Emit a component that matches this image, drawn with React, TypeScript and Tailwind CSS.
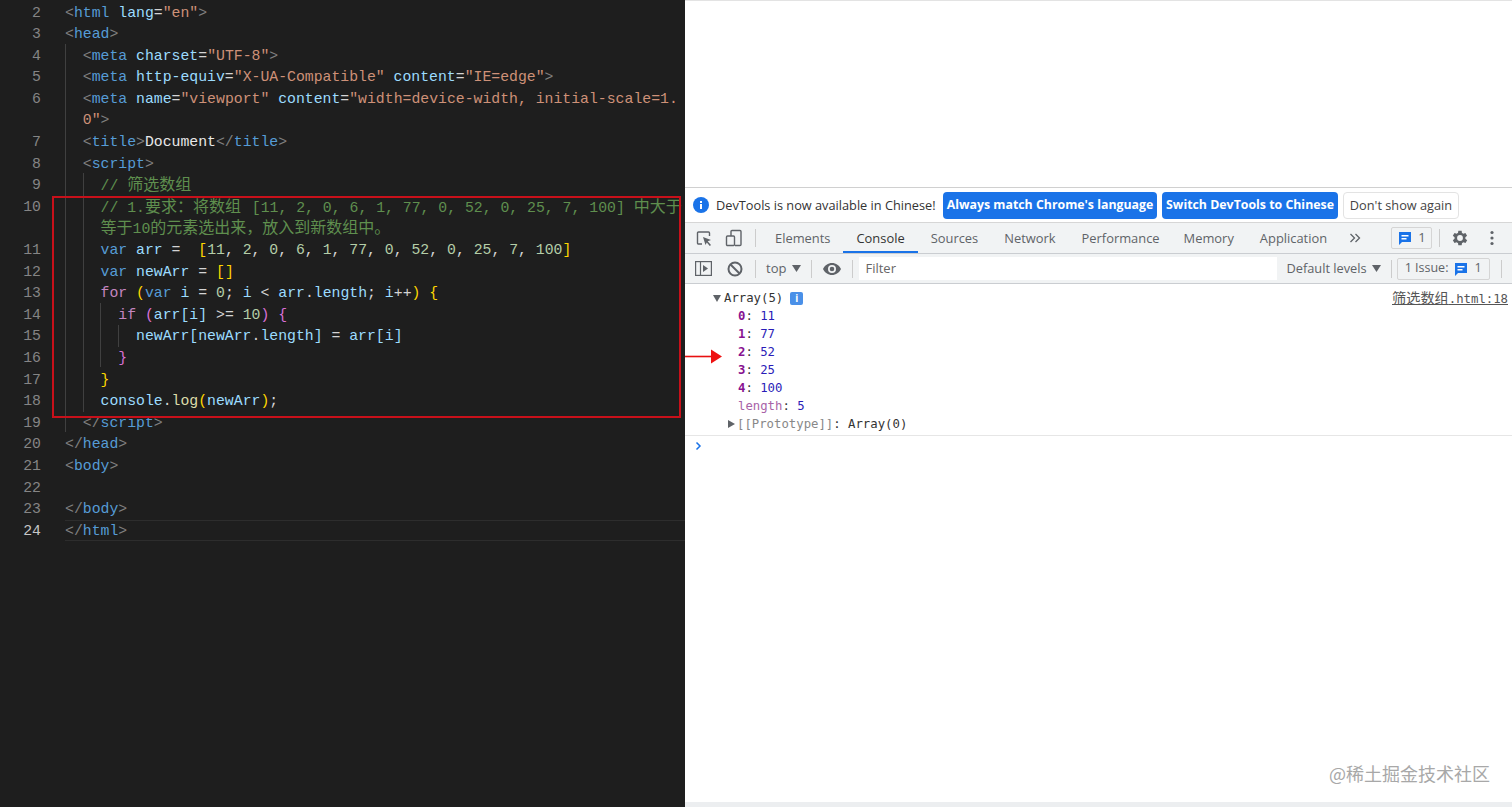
import React from "react";

const T = ({ c, children }: { c: string; children: React.ReactNode }) => <span className={c}>{children}</span>;
const P = "text-[#808080]";
const TAG = "text-[#569cd6]";
const A = "text-[#9cdcfe]";
const S = "text-[#ce9178]";
const C = "text-[#5f8f4e]";
const N = "text-[#b5cea8]";
const W = "text-[#d4d4d4]";
const K = "text-[#c586c0]";
const Y = "text-[#ffd700]";
const M = "text-[#da70d6]";
const Z = ({ children }: { children: React.ReactNode }) => (
  <span className="inline-block text-[16px] leading-[18px] font-['Noto_Sans_CJK_SC',sans-serif]">{children}</span>
);

const Row = ({ n, indent = 0, active, children }: { n?: number; indent?: number; active?: boolean; children?: React.ReactNode }) => (
  <div className="flex h-[21.6px] items-center whitespace-pre leading-[21.6px]">
    <div className={`w-[41px] shrink-0 text-right ${active ? "text-[#c6c6c6]" : "text-[#858585]"}`}>{n}</div>
    <div className="shrink-0" style={{ width: 24 + indent * 17.76 }} />
    <div className="min-w-0">{children}</div>
  </div>
);

const Tab = ({ label, active, className = "" }: { label: string; active?: boolean; className?: string }) => (
  <div className={`flex h-full items-center px-[13px] ${active ? "border-b-2 border-[#1a73e8] pt-[3px] text-[#333]" : "pt-[1px] text-[#5f6368]"} ${className}`}>{label}</div>
);
const Sep = ({ className = "" }: { className?: string }) => <div className={`h-[18px] w-px bg-[#ccc] ${className}`} />;
const Msg = () => (
  <svg width="16" height="16" viewBox="0 0 16 16" className="shrink-0">
    <path d="M2 2h12v10H5l-3 3z" fill="#1a73e8" />
    <path d="M4.500 5h7v1.400h-7zM4.500 8h5v1.400h-5z" fill="#fff" />
  </svg>
);
const Key = ({ k, v, c = "text-[#2a1cb8]" }: { k: string; v: string; c?: string }) => (
  <div className="h-[18px] pl-[53px] leading-[18px]">
    <span className="font-bold text-[#881391]">{k}</span>
    <span className="text-[#333]">: </span>
    <span className={c}>{v}</span>
  </div>
);

export default function App() {
  return (
    <div className="flex h-[807px] w-[1512px] overflow-hidden bg-white">
      {/* editor */}
      <div className="relative h-full w-[685px] shrink-0 overflow-hidden bg-[#1e1e1e] pt-[2.5px] font-['Liberation_Mono',monospace] text-[14.8px]">
        <Row n={2}><T c={P}>&lt;</T><T c={TAG}>html</T> <T c={A}>lang</T><T c={W}>=</T><T c={S}>"en"</T><T c={P}>&gt;</T></Row>
        <Row n={3}><T c={P}>&lt;</T><T c={TAG}>head</T><T c={P}>&gt;</T></Row>
        <Row n={4} indent={1}><T c={P}>&lt;</T><T c={TAG}>meta</T> <T c={A}>charset</T><T c={W}>=</T><T c={S}>"UTF-8"</T><T c={P}>&gt;</T></Row>
        <Row n={5} indent={1}><T c={P}>&lt;</T><T c={TAG}>meta</T> <T c={A}>http-equiv</T><T c={W}>=</T><T c={S}>"X-UA-Compatible"</T> <T c={A}>content</T><T c={W}>=</T><T c={S}>"IE=edge"</T><T c={P}>&gt;</T></Row>
        <Row n={6} indent={1}><T c={P}>&lt;</T><T c={TAG}>meta</T> <T c={A}>name</T><T c={W}>=</T><T c={S}>"viewport"</T> <T c={A}>content</T><T c={W}>=</T><T c={S}>"width=device-width, initial-scale=1.</T></Row>
        <Row indent={1}><T c={S}>0"</T><T c={P}>&gt;</T></Row>
        <Row n={7} indent={1}><T c={P}>&lt;</T><T c={TAG}>title</T><T c={P}>&gt;</T><T c="text-[#e8e8e8]">Document</T><T c={P}>&lt;/</T><T c={TAG}>title</T><T c={P}>&gt;</T></Row>
        <Row n={8} indent={1}><T c={P}>&lt;</T><T c={TAG}>script</T><T c={P}>&gt;</T></Row>
        <Row n={9} indent={2}><T c={C}>// <Z>筛选数组</Z></T></Row>
        <Row n={10} indent={2}><T c={C}>// 1.<Z>要求：将数组</Z> <span className="ml-[2px]">[11, 2, 0, 6, 1, 77, 0, 52, 0, 25, 7, 100]</span> <Z>中大于</Z></T></Row>
        <Row indent={2}><T c={C}><Z>等于</Z>10<Z>的元素选出来，放入到新数组中。</Z></T></Row>
        <Row n={11} indent={2}><T c={TAG}>var</T> <T c={A}>arr</T> <T c={W}>=</T>  <T c={Y}>[</T><T c={N}>11</T><T c={W}>, </T><T c={N}>2</T><T c={W}>, </T><T c={N}>0</T><T c={W}>, </T><T c={N}>6</T><T c={W}>, </T><T c={N}>1</T><T c={W}>, </T><T c={N}>77</T><T c={W}>, </T><T c={N}>0</T><T c={W}>, </T><T c={N}>52</T><T c={W}>, </T><T c={N}>0</T><T c={W}>, </T><T c={N}>25</T><T c={W}>, </T><T c={N}>7</T><T c={W}>, </T><T c={N}>100</T><T c={Y}>]</T></Row>
        <Row n={12} indent={2}><T c={TAG}>var</T> <T c={A}>newArr</T> <T c={W}>=</T> <T c={Y}>[]</T></Row>
        <Row n={13} indent={2}><T c={K}>for</T> <T c={Y}>(</T><T c={TAG}>var</T> <T c={A}>i</T> <T c={W}>=</T> <T c={N}>0</T><T c={W}>;</T> <T c={A}>i</T> <T c={W}>&lt;</T> <T c={A}>arr</T><T c={W}>.</T><T c={A}>length</T><T c={W}>;</T> <T c={A}>i</T><T c={W}>++</T><T c={Y}>)</T> <T c={Y}>{"{"}</T></Row>
        <Row n={14} indent={3}><T c={K}>if</T> <T c={M}>(</T><T c={A}>arr</T><T c={A}>[</T><T c={A}>i</T><T c={A}>]</T> <T c={W}>&gt;=</T> <T c={N}>10</T><T c={M}>)</T> <T c={M}>{"{"}</T></Row>
        <Row n={15} indent={4}><T c={A}>newArr</T><T c={A}>[</T><T c={A}>newArr</T><T c={W}>.</T><T c={A}>length</T><T c={A}>]</T> <T c={W}>=</T> <T c={A}>arr</T><T c={A}>[</T><T c={A}>i</T><T c={A}>]</T></Row>
        <Row n={16} indent={3}><T c={M}>{"}"}</T></Row>
        <Row n={17} indent={2}><T c={Y}>{"}"}</T></Row>
        <Row n={18} indent={2}><T c={A}>console</T><T c={W}>.</T><T c="text-[#dcdcaa]">log</T><T c={Y}>(</T><T c={A}>newArr</T><T c={Y}>)</T><T c={W}>;</T></Row>
        <Row n={19} indent={1}><T c={P}>&lt;/</T><T c={TAG}>script</T><T c={P}>&gt;</T></Row>
        <Row n={20}><T c={P}>&lt;/</T><T c={TAG}>head</T><T c={P}>&gt;</T></Row>
        <Row n={21}><T c={P}>&lt;</T><T c={TAG}>body</T><T c={P}>&gt;</T></Row>
        <Row n={22} />
        <Row n={23}><T c={P}>&lt;/</T><T c={TAG}>body</T><T c={P}>&gt;</T></Row>
        <Row n={24} active><T c={P}>&lt;/</T><T c={TAG}>html</T><T c={P}>&gt;</T></Row>

        {/* indent guides, active line and annotation box lie over the code */}
        <div className="absolute left-[65px] top-[44px] h-[388px] w-px bg-[#404040]" />
        <div className="absolute left-[83px] top-[173px] h-[239px] w-px bg-[#404040]" />
        <div className="absolute left-[100px] top-[303px] h-[64px] w-px bg-[#404040]" />
        <div className="absolute left-[118px] top-[325px] h-[22px] w-px bg-[#404040]" />
        <div className="absolute left-[65px] right-0 top-[520px] h-[21px] border-y border-[#2d2d2d]" />
        <div className="absolute left-[52px] top-[196px] h-[222px] w-[629px] border-2 border-[#c8101a]" />
      </div>

      {/* browser + devtools */}
      <div className="relative flex h-full min-w-0 flex-1 flex-col font-['Open_Sans',sans-serif] text-[12.5px]">
        <div className="h-[188px] shrink-0 border-y border-t-[#e3e3e3] border-b-[#d0d0d0] bg-white" />
        <div className="flex h-[34px] shrink-0 items-center bg-white pl-[8px] text-[12.75px] text-[#333]">
          <svg width="16" height="16" viewBox="0 0 16 16"><circle cx="8" cy="8" r="8" fill="#1a73e8" /><rect x="7" y="7" width="2" height="5" fill="#fff" /><rect x="7" y="4" width="2" height="2" fill="#fff" /></svg>
          <span className="ml-[7px] w-[227px] whitespace-nowrap pt-[1px]">DevTools is now available in Chinese!</span>
          <div className="flex h-[27px] w-[214px] items-center justify-center rounded-[4px] bg-[#1a73e8] pt-[1px] text-[12.35px] font-bold whitespace-nowrap text-white">Always match Chrome's language</div>
          <div className="ml-[5px] flex h-[27px] w-[176px] items-center justify-center rounded-[4px] bg-[#1a73e8] pt-[1px] text-[12.35px] font-bold whitespace-nowrap text-white">Switch DevTools to Chinese</div>
          <div className="ml-[5px] flex h-[27px] w-[116px] items-center justify-center rounded-[4px] border border-[#e3e3e3] pt-[1px] whitespace-nowrap text-[#444]">Don't show again</div>
        </div>
        {/* tabs */}
        <div className="flex h-[32px] shrink-0 items-center border-y border-t-[#d6d6d6] border-b-[#cacdd1] bg-[#f1f3f4] pl-[11px]">
          <svg width="17" height="17" viewBox="0 0 17 17" fill="none" stroke="#5f6368" strokeWidth="1.400"><path d="M6 14H2.500A1 1 0 0 1 1.500 13V3A1 1 0 0 1 2.500 2h10a1 1 0 0 1 1 1v3" /><path d="M7 7l8 3-3.300 1.200L15 15l-1.200 1-3-3.600L9.500 15z" fill="#5f6368" stroke="none" /></svg>
          <svg width="18" height="18" viewBox="0 0 18 18" fill="none" stroke="#5f6368" strokeWidth="1.400" className="ml-[12px]"><path d="M6 7V2.500A1 1 0 0 1 7 1.500h8a1 1 0 0 1 1 1v13a1 1 0 0 1-1 1H10" /><rect x="1.500" y="7" width="8" height="9.500" rx="1" /></svg>
          <Sep className="ml-[12px]" />
          <div className="ml-[6px] flex h-full items-center text-[12.9px] whitespace-nowrap">
            <Tab label="Elements" />
            <Tab label="Console" active />
            <Tab label="Sources" />
            <Tab label="Network" />
            <Tab label="Performance" className="-mr-[2px]" />
            <Tab label="Memory" />
            <Tab label="Application" />
          </div>
          <svg width="12" height="12" viewBox="0 0 12 12" fill="none" stroke="#5f6368" strokeWidth="1.300" className="ml-[9px]"><path d="M1.500 2l4 4-4 4M6.500 2l4 4-4 4" /></svg>
          <div className="ml-auto flex items-center">
            <div className="flex h-[22px] w-[41px] items-center justify-center gap-[5px] rounded-[2px] border border-[#d5d5d5] text-[13px] text-[#5f6368]"><Msg />1</div>
            <Sep className="ml-[7px]" />
            <svg width="20" height="20" viewBox="0 0 24 24" className="ml-[10px]" fill="#5f6368"><path d="M19.400 13a7.800 7.800 0 0 0 0-2l2.100-1.600-2-3.500-2.500 1a7.600 7.600 0 0 0-1.700-1L15 3.200h-4l-.4 2.700a7.600 7.600 0 0 0-1.700 1l-2.500-1-2 3.500L6.500 11a7.800 7.800 0 0 0 0 2l-2.100 1.600 2 3.500 2.500-1a7.600 7.600 0 0 0 1.700 1l.4 2.700h4l.4-2.700a7.600 7.600 0 0 0 1.700-1l2.500 1 2-3.500zM13 15.500a3.500 3.500 0 1 1 0-7 3.500 3.500 0 0 1 0 7z" transform="translate(-1 0)" /></svg>
            <svg width="4" height="16" viewBox="0 0 4 16" className="ml-[20px] mr-[18px]" fill="#5f6368"><circle cx="2" cy="2.500" r="1.600" /><circle cx="2" cy="8" r="1.600" /><circle cx="2" cy="13.500" r="1.600" /></svg>
          </div>
        </div>
        {/* console toolbar */}
        <div className="flex h-[30px] shrink-0 items-center border-b border-[#cacdd1] bg-[#f1f3f4] pl-[10px] text-[#5f6368]">
          <svg width="17" height="15" viewBox="0 0 17 15" fill="none" stroke="#5f6368" strokeWidth="1.200"><rect x=".6" y=".6" width="15.800" height="13.800" /><path d="M5.500 .6v13.800" /><path d="M8 4l5 3.500L8 11z" fill="#5f6368" stroke="none" /></svg>
          <svg width="16" height="16" viewBox="0 0 16 16" fill="none" stroke="#5f6368" strokeWidth="2" className="ml-[15px]"><circle cx="8" cy="8" r="6.500" /><path d="M3.500 3.500l9 9" /></svg>
          <Sep className="ml-[12px]" />
          <span className="ml-[10px] pt-[1px] text-[13px]">top</span>
          <svg width="9" height="7" viewBox="0 0 9 7" className="ml-[6px]" fill="#5f6368"><path d="M0 0h9L4.500 7z" /></svg>
          <Sep className="ml-[10px]" />
          <svg width="18" height="12" viewBox="0 0 18 12" className="ml-[11px]" fill="#5f6368"><path d="M9 0C5 0 1.700 2.500 0 6c1.700 3.500 5 6 9 6s7.300-2.500 9-6c-1.700-3.500-5-6-9-6zm0 10a4 4 0 1 1 0-8 4 4 0 0 1 0 8zm0-6.300a2.300 2.300 0 1 0 0 4.600 2.300 2.300 0 0 0 0-4.600z" /></svg>
          <Sep className="ml-[11px]" />
          <div className="ml-[6px] flex h-[23px] w-[418px] items-center bg-white pl-[6px] pt-[1px] text-[13px] text-[#666]">Filter</div>
          <span className="ml-[9px] whitespace-nowrap pt-[1px] text-[12.8px]">Default levels</span>
          <svg width="9" height="7" viewBox="0 0 9 7" className="ml-[5px]" fill="#5f6368"><path d="M0 0h9L4.500 7z" /></svg>
          <Sep className="ml-[10px]" />
          <div className="ml-[5px] flex h-[22px] w-[93px] items-center justify-center gap-[5px] rounded-[2px] border border-[#d5d5d5] whitespace-nowrap">1 Issue: <Msg />1</div>
          <Sep className="ml-[11px]" />
        </div>
        {/* console */}
        <div className="flex-1 bg-white font-['DejaVu_Sans_Mono',monospace] text-[12.3px]">
          <div className="relative flex h-[152px] flex-col border-b border-[#e6e6e6] pt-[5px]">
            <div className="flex h-[18px] items-center pl-[28px] text-[#333]">
              <svg width="8" height="7" viewBox="0 0 8 7" className="mr-[3px]" fill="#5f6368"><path d="M0 0h8L4 7z" /></svg>
              Array(5)
              <span className="ml-[7px] flex h-[13px] w-[13px] items-center justify-center rounded-[2px] bg-[#4a90e8] font-['Open_Sans',sans-serif] text-[10px] font-bold text-white">i</span>
              <span className="ml-auto mr-[4px] text-[#555] underline"><span className="font-['Noto_Sans_CJK_SC',sans-serif] text-[14.2px]">筛选数组</span>.html:18</span>
            </div>
            <Key k="0" v="11" />
            <Key k="1" v="77" />
            <Key k="2" v="52" />
            <Key k="3" v="25" />
            <Key k="4" v="100" />
            <div className="h-[18px] pl-[53px] leading-[18px]"><span className="text-[#a863a8]">length</span><span className="text-[#333]">: </span><span className="text-[#2a1cb8]">5</span></div>
            <div className="flex h-[18px] items-center pl-[44px] text-[#333]">
              <svg width="7" height="8" viewBox="0 0 7 8" className="mr-[2px] -ml-[1px]" fill="#5f6368"><path d="M0 0l7 4-7 4z" /></svg>
              <span className="text-[#888]">[[Prototype]]</span>: Array(0)
            </div>
          </div>
          <div className="pl-[10px] pt-[5px]">
            <svg width="8" height="10" viewBox="0 0 8 10" fill="none" stroke="#1a73e8" strokeWidth="1.500"><path d="M1.500 1.500L5 5 1.500 8.500" /></svg>
          </div>
        </div>
        <div className="h-[5px] shrink-0 bg-[#eceef0]" />

        {/* overlays */}
        <div className="absolute left-0 top-[346px] h-[20px] w-[38px]">
          <svg width="38" height="20" viewBox="0 0 38 20"><path d="M0 10.500h27" stroke="#e81010" strokeWidth="1.600" /><path d="M26 3.500l11 7-11 7z" fill="#ee1111" /></svg>
        </div>
        <div className="absolute left-[644px] top-[762px] whitespace-nowrap font-['Noto_Sans_CJK_SC',sans-serif] text-[18px] leading-[22px] text-[#a8a8a8]">@稀土掘金技术社区</div>
      </div>
    </div>
  );
}
